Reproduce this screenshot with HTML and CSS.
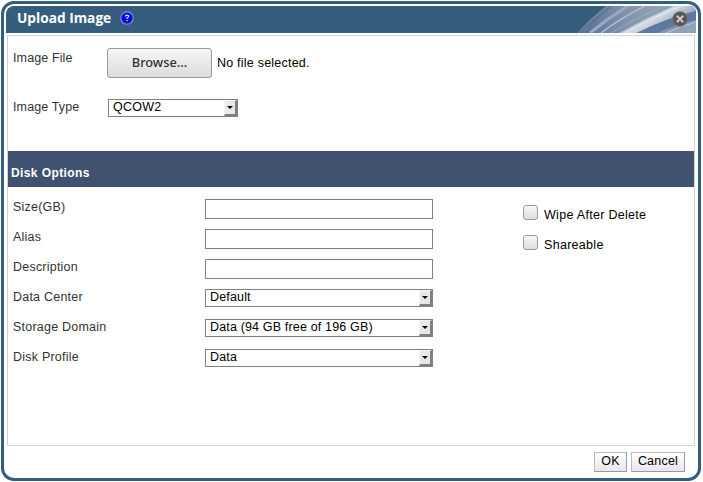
FILE: index.html
```html
<!DOCTYPE html>
<html lang="en">
<head>
<meta charset="utf-8">
<title>Upload Image</title>
<link rel="stylesheet" href="styles.css">
</head>
<body>
<main class="dialog">
  <header class="titlebar">
    <h1>Upload Image</h1>
    <svg class="help" viewBox="0 0 14 14"><circle cx="7" cy="7" r="6.2" fill="#0505ee" stroke="#8292bb" stroke-width="1.2"/><path d="M5.3 5.5Q5.4 4.1 7 4.1Q8.7 4.1 8.6 5.5Q8.5 6.3 7.1 7.1V8M7.1 9V10.2" fill="none" stroke="#dce2ff" stroke-width="1.3"/></svg>
    <svg class="swoosh" viewBox="0 0 118 27" preserveAspectRatio="none">
      <defs>
        <linearGradient id="sky" x1="0" y1="0" x2="1" y2="0"><stop offset="0" stop-color="#526d91"/><stop offset=".35" stop-color="#7b8dab"/><stop offset=".6" stop-color="#8da0b5"/><stop offset="1" stop-color="#91a5ba"/></linearGradient>
        <linearGradient id="beam" gradientUnits="userSpaceOnUse" x1="66" y1="8" x2="77" y2="27"><stop offset="0" stop-color="#9baebf"/><stop offset=".4" stop-color="#d2dce5"/><stop offset="1" stop-color="#a0b0c5"/></linearGradient>
      </defs>
      <path d="M0 27Q13 12 29 0H118V27Z" fill="url(#sky)"/>
      <path d="M0 27Q13 12 29 0" fill="none" stroke="#8498b0"/>
      <path d="M4 27Q17 13 33 0" fill="none" stroke="#607897" stroke-width="2"/>
      <path d="M12 27Q30 12 50 0" fill="none" stroke="#98a9c1" stroke-width="3"/>
      <path d="M23 27Q43 12 67 0" fill="none" stroke="#b8c5d3" stroke-width="1.3"/>
      <path d="M33 27Q58 12 86 0" fill="none" stroke="#98a9bd"/>
      <path d="M41 27Q68 12 96 0H118V4Q88 13 58 27Z" fill="url(#beam)"/>
      <path d="M46 27Q75 11 104 0" fill="none" stroke="#e1e8ed" stroke-width="1.2"/>
      <path d="M59 27Q88 12 118 5V14Q99 18 80 27Z" fill="#60789b"/>
      <path d="M80 27Q99 18 118 14V17Q103 21 90 27Z" fill="#8295ae"/>
      <path d="M88 27Q103 20 118 16" fill="none" stroke="#c5ced8"/>
    </svg>
    <svg class="close" viewBox="0 0 16 16"><circle cx="8" cy="8" r="7.3" fill="#555" stroke="#77736f"/><path d="M4.8 4.8L11.2 11.2M11.2 4.8L4.8 11.2" stroke="#ccc" stroke-width="2"/></svg>
  </header>
  <section class="panel">
    <div class="top-row file-row">
      <span class="label">Image File</span>
      <button class="browse">Browse...</button>
      <span class="file-status">No file selected.</span>
    </div>
    <div class="top-row type-row">
      <span class="label">Image Type</span>
      <div class="select short"><span>QCOW2</span><i></i></div>
    </div>
    <h2>Disk Options</h2>
    <div class="options">
      <div class="fields">
        <div class="row"><span class="label">Size(GB)</span><input type="text" aria-label="Size"></div>
        <div class="row"><span class="label">Alias</span><input type="text" aria-label="Alias"></div>
        <div class="row"><span class="label">Description</span><input type="text" aria-label="Description"></div>
        <div class="row"><span class="label">Data Center</span><div class="select"><span>Default</span><i></i></div></div>
        <div class="row"><span class="label">Storage Domain</span><div class="select"><span>Data (94 GB free of 196 GB)</span><i></i></div></div>
        <div class="row"><span class="label">Disk Profile</span><div class="select"><span>Data</span><i></i></div></div>
      </div>
      <div class="checks">
        <label><input type="checkbox"><span>Wipe After Delete</span></label>
        <label><input type="checkbox"><span>Shareable</span></label>
      </div>
    </div>
  </section>
  <footer><button class="ok">OK</button><button class="cancel">Cancel</button></footer>
</main>
</body>
</html>
```
FILE: styles.css
```css
* { box-sizing: border-box; }
body {
  margin: 0;
  padding: 1px 2px 1px 1px;
  height: 482px;
  background: #fff;
  font: 12.5px/16px "Liberation Sans", Arial, sans-serif;
  letter-spacing: .22px;
  color: #000;
  overflow: hidden;
}
.dialog {
  display: flex;
  flex-direction: column;
  height: 480px;
  border: 3px solid #355d7e;
  border-radius: 13px;
  padding: 2px;
}
.titlebar {
  position: relative;
  display: flex;
  flex: none;
  height: 27px;
  padding-left: 11px;
  background: #355d7e;
  border-radius: 8px 6px 0 0;
  overflow: hidden;
}
h1 {
  margin: 3px 0 0;
  width: 103px;
  font: bold 13.7px/18px "Open Sans", sans-serif;
  letter-spacing: 0;
  color: #fff;
  white-space: nowrap;
}
.help { width: 14px; height: 14px; margin-top: 5px; }
.swoosh { width: 118px; height: 27px; margin-left: auto; }
.close { position: absolute; right: 8px; top: 5px; width: 16px; height: 16px; }
.panel {
  flex: none;
  height: 411px;
  margin: 2px 1px 0;
  border: 1px solid #ccd6df;
}
.label { color: #333; white-space: nowrap; }
.top-row { display: flex; padding-left: 5px; }
.top-row .label { width: 95px; letter-spacing: .12px; }
.file-row { height: 62px; padding-top: 12px; }
.file-row .label { width: 94px; margin-top: 2px; }
.browse {
  width: 105px;
  height: 30px;
  padding: 0 0 2px;
  border: 1px solid #999;
  border-radius: 3px;
  background: linear-gradient(#f6f6f6, #dcdcdc);
  font: 500 12.8px/20px "Noto Sans", sans-serif;
  letter-spacing: 0;
  color: #2e3436;
}
.file-status { margin: 7px 0 0 5px; }
.type-row { height: 53px; }
.type-row .label { margin-top: 1px; }
.select {
  display: flex;
  justify-content: space-between;
  width: 228px;
  height: 18px;
  border: 1px solid #808080;
  padding-left: 4px;
  line-height: 14px;
  background: #fff;
  white-space: nowrap;
}
.short { width: 130px; margin-top: 1px; }
.select i {
  display: grid;
  place-items: center;
  width: 13px;
  height: 16px;
  background: #e8e8e8;
  border: solid;
  border-width: 1px 2px 2px 1px;
  border-color: #f4f4f4 #808080 #808080 #f4f4f4;
}
.select i::after {
  content: "";
  border: solid transparent;
  border-width: 3px 3px 0;
  border-top-color: #000;
}
h2 {
  margin: 0;
  height: 36px;
  padding: 14px 3px 0;
  background: #40526f;
  color: #fff;
  font-size: 12px;
  letter-spacing: .4px;
  line-height: 16px;
}
.options { display: flex; padding: 12px 0 0 5px; }
.fields { width: 510px; }
.row { display: flex; height: 30px; }
.row .label { width: 192px; }
.row .select { letter-spacing: .16px; }
.row input { width: 228px; height: 20px; margin: 0; border: 1px solid #808080; padding: 1px 4px; background: #fff; }
.checks { padding-top: 6px; letter-spacing: .3px; }
.checks label { display: flex; height: 30px; }
.checks input {
  appearance: none;
  width: 15px;
  height: 15px;
  margin: 0 6px 0 0;
  border: 1px solid #999;
  border-radius: 3px;
  background: linear-gradient(#f8f8f8, #dedede);
}
.checks span { margin-top: 2px; white-space: nowrap; }
footer { display: flex; justify-content: flex-end; gap: 4px; padding: 6px 11px 0 0; }
footer button {
  height: 20px;
  padding: 0 0 2px;
  border: 1px solid #bbb;
  border-right-color: #999;
  border-bottom-color: #999;
  background: linear-gradient(#fff, #e7e7ec);
  font: inherit;
  letter-spacing: inherit;
}
.ok { width: 33px; }
.cancel { width: 54px; }
```
